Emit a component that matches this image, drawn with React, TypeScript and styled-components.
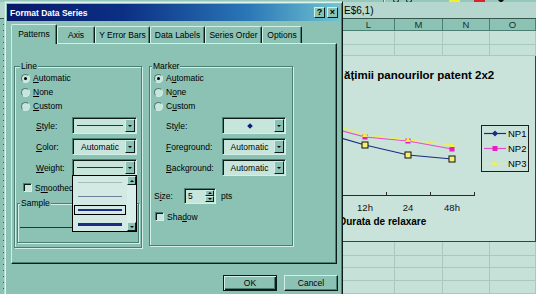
import React from 'react';
import styled, { createGlobalStyle } from 'styled-components';

const face = '#8bc2b4';
const light = '#d2eee6';
const shadow = '#4b7e75';
const dark = '#0d1c19';
const field = '#c8e5dc';
const navy = '#1c2c86';

const GlobalStyle = createGlobalStyle`
  html, body { margin: 0; padding: 0; }
  body { background: ${face}; font-family: "Liberation Sans", Arial, sans-serif; }
`;

type Pt = [number, number];

const series: { name: string; color: string; marker: 'handle' | 'square' | 'triangle'; legend: 'diamond' | 'square' | 'triangle'; pts: Pt[] }[] = [
  { name: 'NP1', color: '#1c2a80', marker: 'handle', legend: 'diamond', pts: [[-12, 49], [22, 59], [65, 69], [109, 73]] },
  { name: 'NP2', color: '#e44cc8', marker: 'square', legend: 'square', pts: [[-12, 42], [22, 51], [65, 55], [109, 63]] },
  { name: 'NP3', color: '#f2f04a', marker: 'triangle', legend: 'triangle', pts: [[-12, 38], [22, 49], [65, 54], [109, 59]] },
];

const tabs = [
  { label: 'Patterns', w: 46, active: true },
  { label: 'Axis', w: 38 },
  { label: 'Y Error Bars', w: 55 },
  { label: 'Data Labels', w: 55 },
  { label: 'Series Order', w: 57 },
  { label: 'Options', w: 40 },
];

const weights = [
  { h: 1, c: '#a9bdb8' },
  { h: 1, c: '#6f7f9c' },
  { h: 2, c: navy, selected: true },
  { h: 3, c: navy },
];

const cols = ['K', 'L', 'M', 'N', 'O'];

function Marker({ kind, x, y, color }: { kind: string; x: number; y: number; color: string }) {
  if (kind === 'handle') return <rect x={x - 3} y={y - 3} width={6} height={6} fill="#f4f070" stroke="#111" strokeWidth={1} />;
  if (kind === 'square') return <rect x={x - 2.5} y={y - 2.5} width={5} height={5} fill="#e020c0" />;
  if (kind === 'diamond') return <path d={`M${x} ${y - 3}L${x + 3} ${y}L${x} ${y + 3}L${x - 3} ${y}Z`} fill={color} />;
  return <path d={`M${x} ${y - 3}L${x + 3} ${y + 2}L${x - 3} ${y + 2}Z`} fill={color} />;
}

export default function App() {
  return (
    <Screen>
      <GlobalStyle />
      <Sheet>
        <Toolbar>
          <ToolSep />
          <ToolGlyph $ml={9} />
          <ToolGlyph $ml={7} />
          <ToolLine $ml={10} />
          <ToolColor $c="#f2ee28" $ml={19} />
          <ToolColor $c="#e0202c" $ml={14} />
          <ToolArrow $ml={13} />
        </Toolbar>
        <FormulaBar>E$6,1)</FormulaBar>
        <SheetGrid>
          <RowStrip />
          {cols.map((c) => (
            <ColHead key={c}>{c}</ColHead>
          ))}
          {[0, 1].flatMap((r) => cols.map((c) => <Cell key={`a${r}${c}`} />))}
          <Cell />
          <Chart>
            <ChartTitle>ățimii panourilor patent 2x2</ChartTitle>
            <PlotRow>
              <svg width={138} height={130} viewBox="0 0 138 130">
                {series.map((s) => (
                  <polyline key={s.name} points={s.pts.map((p) => p.join(',')).join(' ')} fill="none" stroke={s.color} strokeWidth={1.2} />
                ))}
                {series.map((s) =>
                  s.pts.slice(1).map(([x, y]) => <Marker key={`${s.name}${x}`} kind={s.marker} x={x} y={y} color={s.color} />),
                )}
                <line x1={0} y1={109.5} x2={131} y2={109.5} stroke="#2a2a2a" />
                {[43, 87, 131].map((x) => (
                  <line key={x} x1={x + 0.5} y1={106} x2={x + 0.5} y2={110} stroke="#2a2a2a" />
                ))}
                <g fontFamily='"Liberation Sans", Arial, sans-serif' fontSize={9.5} fill="#111" textAnchor="middle">
                  <text x={22} y={125}>12h</text>
                  <text x={65} y={125}>24</text>
                  <text x={109} y={125}>48h</text>
                </g>
              </svg>
              <Legend>
                {series.map((s) => (
                  <LegendItem key={s.name}>
                    <svg width={22} height={7} viewBox="0 0 22 7">
                      <line x1={0} y1={3.5} x2={22} y2={3.5} stroke={s.color} strokeWidth={1.2} />
                      <Marker kind={s.legend} x={11} y={3.5} color={s.legend === 'square' ? '#e020c0' : s.color} />
                    </svg>
                    {s.name}
                  </LegendItem>
                ))}
              </Legend>
            </PlotRow>
            <AxisTitle>Durata de relaxare</AxisTitle>
          </Chart>
          {[0, 1, 2, 3].flatMap((r) => cols.map((c) => <Cell key={`b${r}${c}`} />))}
        </SheetGrid>
      </Sheet>

      <Dialog>
        <TitleBar>
          <TitleText>Format Data Series</TitleText>
          <CaptionButton>?</CaptionButton>
          <CaptionButton>×</CaptionButton>
        </TitleBar>
        <Body>
          <TabStrip>
            {tabs.map((t) => (
              <Tab key={t.label} $w={t.w} $active={t.active}>
                {t.label}
              </Tab>
            ))}
          </TabStrip>
          <Panel>
            <GroupBox $w={128} $h={182}>
              <GroupLabel $left={5}>Line</GroupLabel>
              <Radios $pl={6}>
                <RadioRow>
                  <Radio $checked />
                  <span><u>A</u>utomatic</span>
                </RadioRow>
                <RadioRow>
                  <Radio />
                  <span><u>N</u>one</span>
                </RadioRow>
                <RadioRow>
                  <Radio />
                  <span><u>C</u>ustom</span>
                </RadioRow>
              </Radios>
              <FieldRow $pl={21}>
                <FieldLabel $w={36}><u>S</u>tyle:</FieldLabel>
                <Dropdown $w={65}>
                  <DropValue><LineSample $h={1} $c={navy} /></DropValue>
                  <DropButton><Arrow /></DropButton>
                </Dropdown>
              </FieldRow>
              <FieldRow $pl={21}>
                <FieldLabel $w={36}><u>C</u>olor:</FieldLabel>
                <Dropdown $w={65}>
                  <DropValue>Automatic</DropValue>
                  <DropButton><Arrow /></DropButton>
                </Dropdown>
              </FieldRow>
              <FieldRow $pl={21}>
                <FieldLabel $w={36}><u>W</u>eight:</FieldLabel>
                <Dropdown $w={65}>
                  <DropValue><LineSample $h={1} $c={navy} /></DropValue>
                  <DropButton><Arrow /></DropButton>
                  <DropList>
                    <ListItems>
                      {weights.map((w, i) => (
                        <ListItem key={i} $selected={w.selected}>
                          <LineSample $h={w.h} $c={w.c} />
                        </ListItem>
                      ))}
                    </ListItems>
                    <ScrollBar>
                      <ScrollButton><Arrow $up /></ScrollButton>
                      <ScrollTrack />
                      <ScrollButton><Arrow /></ScrollButton>
                    </ScrollBar>
                  </DropList>
                </Dropdown>
              </FieldRow>
              <CheckRow $pl={8} $mt={5}>
                <CheckBox />
                <span>S<u>m</u>oothed</span>
              </CheckRow>
              <SampleBox $w={122} $h={40}>
                <GroupLabel $left={2}>Sample</GroupLabel>
                <SampleLine />
              </SampleBox>
            </GroupBox>

            <GroupBox $w={144} $h={180}>
              <GroupLabel $left={2}>Marker</GroupLabel>
              <Radios $pl={4}>
                <RadioRow>
                  <Radio $checked />
                  <span>A<u>u</u>tomatic</span>
                </RadioRow>
                <RadioRow>
                  <Radio />
                  <span>N<u>o</u>ne</span>
                </RadioRow>
                <RadioRow>
                  <Radio />
                  <span>C<u>u</u>stom</span>
                </RadioRow>
              </Radios>
              <FieldRow $pl={16}>
                <FieldLabel $w={56}>St<u>y</u>le:</FieldLabel>
                <Dropdown $w={64}>
                  <DropValue><Diamond /></DropValue>
                  <DropButton><Arrow /></DropButton>
                </Dropdown>
              </FieldRow>
              <FieldRow $pl={16}>
                <FieldLabel $w={56}><u>F</u>oreground:</FieldLabel>
                <Dropdown $w={64}>
                  <DropValue>Automatic</DropValue>
                  <DropButton><Arrow /></DropButton>
                </Dropdown>
              </FieldRow>
              <FieldRow $pl={16}>
                <FieldLabel $w={56}><u>B</u>ackground:</FieldLabel>
                <Dropdown $w={64}>
                  <DropValue>Automatic</DropValue>
                  <DropButton><Arrow /></DropButton>
                </Dropdown>
              </FieldRow>
              <SizeRow>
                <FieldLabel $w={30}>S<u>i</u>ze:</FieldLabel>
                <Spin>
                  <SpinValue>5</SpinValue>
                  <SpinButtons>
                    <SpinButton><Arrow $up /></SpinButton>
                    <SpinButton><Arrow /></SpinButton>
                  </SpinButtons>
                </Spin>
                <Unit>pts</Unit>
              </SizeRow>
              <CheckRow $pl={5} $mt={6}>
                <CheckBox />
                <span>Sha<u>d</u>ow</span>
              </CheckRow>
            </GroupBox>
          </Panel>
          <ButtonRow>
            <PushButton $default>OK</PushButton>
            <PushButton>Cancel</PushButton>
          </ButtonRow>
        </Body>
      </Dialog>
    </Screen>
  );
}

/* ---------- spreadsheet behind ---------- */

const Screen = styled.div`
  position: relative;
  width: 536px;
  height: 294px;
  overflow: hidden;
  background: ${face};
`;

const Sheet = styled.div`
  display: flex;
  flex-direction: column;
  height: 100%;
  color: #000;
`;

const Toolbar = styled.div`
  display: flex;
  align-items: flex-start;
  height: 4px;
  padding-left: 383px;
  background: #94c8bb;
  overflow: hidden;
`;

const ToolSep = styled.span`
  width: 1px;
  height: 4px;
  background: ${shadow};
  box-shadow: 1px 0 0 ${light};
`;

const ToolGlyph = styled.span<{ $ml: number }>`
  width: 4px;
  height: 2px;
  margin-left: ${(p) => p.$ml}px;
  border: 1px solid #1e3631;
  border-top: 0;
  border-radius: 0 0 3px 3px;
`;

const ToolLine = styled.span<{ $ml: number }>`
  width: 8px;
  height: 1px;
  margin: 2px 0 0 ${(p) => p.$ml}px;
  background: #1e3631;
`;

const ToolColor = styled.span<{ $c: string; $ml: number }>`
  width: 11px;
  height: 3px;
  margin-left: ${(p) => p.$ml}px;
  background: ${(p) => p.$c};
`;

const ToolArrow = styled.span<{ $ml: number }>`
  margin-left: ${(p) => p.$ml}px;
  border-left: 3px solid transparent;
  border-right: 3px solid transparent;
  border-top: 3px solid #111;
`;

const FormulaBar = styled.div`
  height: 16px;
  padding-left: 344px;
  border-bottom: 1px solid #35564f;
  background: #b6d7ce;
  font-size: 10px;
  line-height: 17px;
  white-space: nowrap;
`;

const SheetGrid = styled.div`
  display: grid;
  grid-template-columns: 7px 336px 52px 48px 47px 46px;
  grid-template-rows: 12px 14px 11px 186px 14px 12px 13px 13px;
`;

const RowStrip = styled.div`
  grid-column: 1;
  grid-row: 1 / -1;
  background-color: ${face};
  background-image: repeating-linear-gradient(180deg, transparent 0 5px, #2f5a52 5px 6px);
  background-size: 1px 100%;
  background-position: 3px 0;
  background-repeat: no-repeat;
  border-right: 1px solid ${shadow};
`;

const ColHead = styled.div`
  box-sizing: border-box;
  display: flex;
  align-items: center;
  justify-content: center;
  background: ${face};
  border-right: 1px solid ${shadow};
  border-bottom: 1px solid ${shadow};
  font-size: 9.5px;
  color: #16302b;
`;

const Cell = styled.div`
  box-sizing: border-box;
  background: #c5e1d8;
  border-right: 1px solid #a7c9c0;
  border-bottom: 1px solid #a7c9c0;
`;

const Chart = styled.div`
  grid-column: span 4;
  box-sizing: border-box;
  display: flex;
  flex-direction: column;
  overflow: hidden;
  background: #c9e3db;
  border-right: 1px solid #34443f;
  border-bottom: 1px solid #34443f;
`;

const ChartTitle = styled.div`
  margin: 12px 0 0 1px;
  font-size: 11.5px;
  font-weight: bold;
  line-height: 14px;
  white-space: nowrap;
`;

const PlotRow = styled.div`
  display: flex;
  align-items: flex-start;
  height: 130px;
  margin-top: 4px;
`;

const Legend = styled.div`
  box-sizing: border-box;
  display: flex;
  flex-direction: column;
  width: 48px;
  height: 47px;
  margin-top: 39px;
  padding: 0 0 0 2px;
  border: 1px solid #1e1e1e;
`;

const LegendItem = styled.div`
  display: flex;
  align-items: center;
  gap: 2px;
  height: 15px;
  font-size: 9.5px;
`;

const AxisTitle = styled.div`
  margin-left: -4px;
  font-size: 10px;
  font-weight: bold;
  line-height: 12px;
  white-space: nowrap;
`;

/* ---------- dialog ---------- */

const Dialog = styled.div`
  position: absolute;
  left: 4px;
  top: 1px;
  width: 339px;
  height: 300px;
  box-sizing: border-box;
  padding: 2px;
  background: ${face};
  border: 1px solid;
  border-color: #b7dbd1 ${dark} ${dark} #b7dbd1;
  box-shadow: inset 1px 1px 0 #e0f4ee, inset -1px -1px 0 ${shadow};
  font-size: 8.5px;
  line-height: 10px;
  color: #000;
`;

const TitleBar = styled.div`
  display: flex;
  align-items: center;
  gap: 2px;
  height: 17px;
  padding: 0 2px;
  background: linear-gradient(90deg, #07196a 0%, #0c2f84 35%, #2a76b6 72%, #70c4d2 100%);
`;

const TitleText = styled.span`
  flex: 1;
  margin-left: 1px;
  color: #fff;
  font-weight: bold;
`;

const CaptionButton = styled.span`
  box-sizing: border-box;
  display: flex;
  align-items: center;
  justify-content: center;
  width: 11px;
  height: 11px;
  background: ${face};
  border: 1px solid;
  border-color: ${light} ${dark} ${dark} ${light};
  font-size: 9px;
  font-weight: bold;
  line-height: 9px;
`;

const Body = styled.div`
  padding: 3px 3px 0 4px;
`;

const TabStrip = styled.div`
  display: flex;
  align-items: flex-end;
  height: 19px;
`;

const Tab = styled.div<{ $w: number; $active?: boolean }>`
  position: relative;
  z-index: ${(p) => (p.$active ? 1 : 0)};
  box-sizing: border-box;
  display: flex;
  align-items: center;
  justify-content: center;
  width: ${(p) => p.$w}px;
  height: ${(p) => (p.$active ? 20 : 17)}px;
  margin-bottom: ${(p) => (p.$active ? -1 : 0)}px;
  padding-bottom: ${(p) => (p.$active ? 2 : 0)}px;
  background: ${face};
  border-top: 1px solid ${light};
  border-left: 1px solid ${light};
  border-right: 1px solid ${dark};
  border-radius: 2px 2px 0 0;
  box-shadow: inset -1px 0 0 ${shadow};
  white-space: nowrap;
`;

const Panel = styled.div`
  box-sizing: border-box;
  display: flex;
  align-items: flex-start;
  gap: 7px;
  height: 221px;
  padding: 22px 0 0 2px;
  border-top: 1px solid ${light};
  border-left: 1px solid ${light};
  border-right: 1px solid ${dark};
  border-bottom: 1px solid ${dark};
  box-shadow: inset -1px -1px 0 ${shadow};
`;

const GroupBox = styled.div<{ $w: number; $h: number }>`
  position: relative;
  box-sizing: border-box;
  display: flex;
  flex-direction: column;
  width: ${(p) => p.$w}px;
  height: ${(p) => p.$h}px;
  border: 1px solid ${shadow};
  box-shadow: inset 1px 1px 0 ${light}, 1px 1px 0 ${light};
`;

const SampleBox = styled(GroupBox)`
  margin: 9px 0 0 2px;
`;

const GroupLabel = styled.span<{ $left: number }>`
  position: absolute;
  top: -6px;
  left: ${(p) => p.$left}px;
  padding: 0 1px;
  background: ${face};
`;

const Radios = styled.div<{ $pl: number }>`
  display: flex;
  flex-direction: column;
  padding: 4px 0 0 ${(p) => p.$pl}px;
`;

const RadioRow = styled.div`
  display: flex;
  align-items: center;
  gap: 3px;
  height: 14px;
`;

const Radio = styled.span<{ $checked?: boolean }>`
  box-sizing: border-box;
  display: flex;
  align-items: center;
  justify-content: center;
  width: 9px;
  height: 9px;
  border-radius: 50%;
  border: 1px solid;
  border-color: ${shadow} ${light} ${light} ${shadow};
  background: ${field};
  &::after {
    content: '';
    display: ${(p) => (p.$checked ? 'block' : 'none')};
    width: 3px;
    height: 3px;
    border-radius: 50%;
    background: #000;
  }
`;

const FieldRow = styled.div<{ $pl: number }>`
  display: flex;
  align-items: center;
  height: 17px;
  margin-top: 4px;
  padding-left: ${(p) => p.$pl}px;
`;

const FieldLabel = styled.span<{ $w: number }>`
  width: ${(p) => p.$w}px;
  white-space: nowrap;
`;

const Dropdown = styled.div<{ $w: number }>`
  position: relative;
  box-sizing: border-box;
  display: flex;
  width: ${(p) => p.$w}px;
  height: 17px;
  padding: 1px;
  background: ${field};
  border: 1px solid;
  border-color: ${shadow} ${light} ${light} ${shadow};
  box-shadow: inset 1px 1px 0 ${dark};
`;

const DropValue = styled.span`
  flex: 1;
  display: flex;
  align-items: center;
  justify-content: center;
  padding: 0 2px 0 3px;
`;

const DropButton = styled.span`
  box-sizing: border-box;
  display: flex;
  align-items: center;
  justify-content: center;
  width: 10px;
  background: ${face};
  border: 1px solid;
  border-color: ${light} ${dark} ${dark} ${light};
`;

const Arrow = styled.span<{ $up?: boolean }>`
  border-left: 2px solid transparent;
  border-right: 2px solid transparent;
  ${(p) => (p.$up ? 'border-bottom: 2px solid #000;' : 'border-top: 2px solid #000;')}
`;

const LineSample = styled.span<{ $h: number; $c: string }>`
  flex: 1;
  height: ${(p) => p.$h}px;
  background: ${(p) => p.$c};
`;

const Diamond = styled.span`
  width: 4px;
  height: 4px;
  background: #0e1e78;
  transform: rotate(45deg);
`;

const DropList = styled.div`
  position: absolute;
  z-index: 2;
  top: 100%;
  left: -1px;
  box-sizing: border-box;
  display: flex;
  width: 65px;
  height: 57px;
  background: #d2eae3;
  border: 1px solid #000;
`;

const ListItems = styled.div`
  flex: 1;
  display: flex;
  flex-direction: column;
  padding: 0 1px;
`;

const ListItem = styled.div<{ $selected?: boolean }>`
  box-sizing: border-box;
  display: flex;
  align-items: center;
  height: 14px;
  padding: 0 3px;
  border: 1px solid ${(p) => (p.$selected ? '#000' : 'transparent')};
  margin: ${(p) => (p.$selected ? '2px 0' : '0')};
  ${(p) => (p.$selected ? 'height: 10px;' : '')}
`;

const ScrollBar = styled.div`
  display: flex;
  flex-direction: column;
  width: 9px;
`;

const ScrollButton = styled.span`
  box-sizing: border-box;
  display: flex;
  align-items: center;
  justify-content: center;
  height: 9px;
  background: ${face};
  border: 1px solid;
  border-color: ${light} ${dark} ${dark} ${light};
`;

const ScrollTrack = styled.span`
  flex: 1;
  background: #d8eee8;
`;

const CheckRow = styled.div<{ $pl: number; $mt: number }>`
  display: flex;
  align-items: center;
  gap: 3px;
  height: 13px;
  margin-top: ${(p) => p.$mt}px;
  padding-left: ${(p) => p.$pl}px;
`;

const CheckBox = styled.span`
  box-sizing: border-box;
  width: 9px;
  height: 9px;
  background: ${field};
  border: 1px solid;
  border-color: ${shadow} ${light} ${light} ${shadow};
  box-shadow: inset 1px 1px 0 ${dark};
`;

const SampleLine = styled.span`
  width: 80px;
  height: 1px;
  margin: 23px 0 0 2px;
  background: ${navy};
`;

const SizeRow = styled.div`
  display: flex;
  align-items: center;
  height: 16px;
  margin-top: 12px;
  padding-left: 4px;
`;

const Spin = styled.div`
  box-sizing: border-box;
  display: flex;
  width: 32px;
  height: 16px;
  padding: 1px;
  background: ${field};
  border: 1px solid;
  border-color: ${shadow} ${light} ${light} ${shadow};
  box-shadow: inset 1px 1px 0 ${dark};
`;

const SpinValue = styled.span`
  flex: 1;
  display: flex;
  align-items: center;
  padding-left: 2px;
`;

const SpinButtons = styled.span`
  display: flex;
  flex-direction: column;
  width: 9px;
`;

const SpinButton = styled.span`
  box-sizing: border-box;
  flex: 1;
  display: flex;
  align-items: center;
  justify-content: center;
  background: ${face};
  border: 1px solid;
  border-color: ${light} ${dark} ${dark} ${light};
`;

const Unit = styled.span`
  margin-left: 5px;
`;

const ButtonRow = styled.div`
  display: flex;
  justify-content: flex-end;
  gap: 7px;
  margin: 11px -1px 0 0;
`;

const PushButton = styled.span<{ $default?: boolean }>`
  box-sizing: border-box;
  display: flex;
  align-items: center;
  justify-content: center;
  width: 54px;
  height: 16px;
  background: ${face};
  border: 1px solid;
  border-color: ${(p) => (p.$default ? `${dark}` : `${light} ${dark} ${dark} ${light}`)};
  box-shadow: ${(p) =>
    p.$default
      ? `inset 1px 1px 0 ${light}, inset -1px -1px 0 ${dark}, inset -2px -2px 0 ${shadow}`
      : `inset -1px -1px 0 ${shadow}`};
`;
